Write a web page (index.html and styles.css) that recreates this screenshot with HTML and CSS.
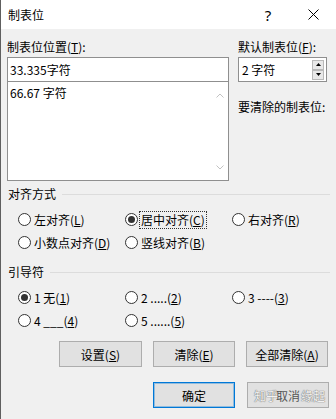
FILE: index.html
```html
<!DOCTYPE html>
<html lang="zh-CN">
<head>
<meta charset="utf-8">
<title>制表位</title>
<link rel="stylesheet" href="styles.css">
</head>
<body>
<div class="dialog">
  <div class="titlebar">
    <span class="title">制表位</span>
    <span class="help">?</span>
    <span class="close"><svg width="11" height="11" viewBox="0 0 11 11"><path d="M0.5 0.5L10.5 10.5M10.5 0.5L0.5 10.5" stroke="#000" stroke-width="1" fill="none"/></svg></span>
  </div>
  <div class="content">
    <div class="top">
      <div class="col-left">
        <div class="label">制表位位置(<u>T</u>):</div>
        <div class="field">33.335字符</div>
        <div class="list">
          <div class="list-items"><div class="item">66.67 字符</div></div>
          <div class="scrollbar">
            <svg width="8" height="5" viewBox="0 0 8 5"><path d="M0.5 4.5L4 1L7.5 4.5" stroke="#c2c2c2" fill="none"/></svg>
            <svg width="8" height="5" viewBox="0 0 8 5"><path d="M0.5 0.5L4 4L7.5 0.5" stroke="#c2c2c2" fill="none"/></svg>
          </div>
        </div>
      </div>
      <div class="col-right">
        <div class="label">默认制表位(<u>F</u>):</div>
        <div class="field spin">
          <span class="spin-text">2 字符</span>
          <span class="spin-btns">
            <span class="sb"><svg width="5" height="3" viewBox="0 0 5 3"><path d="M0 3L2.5 0L5 3Z" fill="#000"/></svg></span>
            <span class="sb"><svg width="5" height="3" viewBox="0 0 5 3"><path d="M0 0L2.5 3L5 0Z" fill="#000"/></svg></span>
          </span>
        </div>
        <div class="label clear-label">要清除的制表位:</div>
      </div>
    </div>

    <div class="group-head"><span>对齐方式</span><span class="rule"></span></div>
    <div class="radios">
      <label class="radio"><span class="circle"></span><span>左对齐(<u>L</u>)</span></label>
      <label class="radio"><span class="circle checked"></span><span class="focus">居中对齐(<u>C</u>)</span></label>
      <label class="radio"><span class="circle"></span><span>右对齐(<u>R</u>)</span></label>
      <label class="radio"><span class="circle"></span><span>小数点对齐(<u>D</u>)</span></label>
      <label class="radio"><span class="circle"></span><span>竖线对齐(<u>B</u>)</span></label>
    </div>

    <div class="group-head second"><span>引导符</span><span class="rule"></span></div>
    <div class="radios">
      <label class="radio"><span class="circle checked"></span><span>1 无(<u>1</u>)</span></label>
      <label class="radio"><span class="circle"></span><span>2 .....(<u>2</u>)</span></label>
      <label class="radio"><span class="circle"></span><span>3 ----(<u>3</u>)</span></label>
      <label class="radio"><span class="circle"></span><span>4 ___(<u>4</u>)</span></label>
      <label class="radio"><span class="circle"></span><span>5 ......(<u>5</u>)</span></label>
    </div>

    <div class="btn-row">
      <button class="btn wide">设置(<u>S</u>)</button>
      <button class="btn">清除(<u>E</u>)</button>
      <button class="btn">全部清除(<u>A</u>)</button>
    </div>
    <div class="btn-row last">
      <button class="btn default">确定</button>
      <button class="btn cancel"><span class="wm wm-left">知乎</span>取消<span class="wm wm-right">缘起</span></button>
    </div>
  </div>
</div>
</body>
</html>
```

FILE: styles.css
```css
html, body {
  margin: 0;
  padding: 0;
  background: #f0f0f0;
}

.dialog {
  width: 336px;
  height: 419px;
  box-sizing: border-box;
  border-left: 1px solid #5f5f5f;
  background: #f0f0f0;
  font-family: "Noto Sans CJK SC", "Noto Sans", sans-serif;
  font-size: 12px;
  line-height: 16px;
  color: #000;
  display: flex;
  flex-direction: column;
  overflow: hidden;
}

.titlebar {
  height: 29px;
  flex: none;
  background: #fff;
  display: flex;
  align-items: center;
  padding-left: 7px;
}

.title {
  flex: 1;
  font-size: 12px;
}

.help {
  width: 30px;
  text-align: center;
  font-family: "Noto Sans", sans-serif;
  font-size: 15px;
  margin-right: 7px;
}

.close {
  width: 46px;
  height: 29px;
  display: flex;
  align-items: center;
  justify-content: center;
}

.content {
  padding: 10px 6px 0 6px;
  display: flex;
  flex-direction: column;
}

.top {
  display: grid;
  grid-template-columns: 222px 89px;
  column-gap: 9px;
}

.label {
  height: 16px;
  margin-bottom: 2px;
  white-space: nowrap;
}

.field {
  height: 25px;
  box-sizing: border-box;
  border: 1px solid #8f8f8f;
  background: #fff;
  padding-left: 2px;
  display: flex;
  align-items: center;
}

.list {
  margin-top: -1px;
  height: 100px;
  box-sizing: border-box;
  border: 1px solid #8f8f8f;
  background: #fff;
  display: flex;
}

.list-items {
  flex: 1;
  padding: 3px 0 0 2px;
}

.scrollbar {
  width: 17px;
  display: flex;
  flex-direction: column;
  align-items: center;
  justify-content: space-between;
  padding: 11px 0 10px;
}

.spin {
  padding-left: 3px;
  padding-right: 2px;
}

.spin-text {
  flex: 1;
}

.spin-btns {
  display: flex;
  flex-direction: column;
  width: 12px;
}

.sb {
  height: 10px;
  box-sizing: border-box;
  border: 1px solid #b9b9b9;
  background: #e8e8e8;
  display: flex;
  align-items: center;
  justify-content: center;
}

.clear-label {
  margin-top: 17px;
}

.group-head {
  margin-top: 5px;
  height: 16px;
  display: flex;
  align-items: center;
  padding-left: 1px;
}

.group-head.second {
  margin-top: 10px;
}

.rule {
  flex: 1;
  height: 1px;
  background: #dcdcdc;
  margin-left: 6px;
}

.radios {
  padding-top: 6px;
  padding-left: 11px;
  display: grid;
  grid-template-columns: 107px 107px auto;
  grid-auto-rows: 23px;
}

.radio {
  display: flex;
  align-items: center;
  white-space: nowrap;
}

.circle {
  width: 13px;
  height: 13px;
  box-sizing: border-box;
  border: 1px solid #333;
  border-radius: 50%;
  background: #fff;
  margin-right: 3px;
  display: flex;
  align-items: center;
  justify-content: center;
  flex: none;
}

.circle.checked::after {
  content: "";
  width: 7px;
  height: 7px;
  border-radius: 50%;
  background: #333;
}

.focus {
  outline: 1px dotted #333;
  outline-offset: 0;
  padding: 0 1px;
  margin-left: -1px;
}

.btn-row {
  margin-top: 9px;
  display: flex;
  justify-content: flex-end;
  gap: 11px;
  padding-right: 2px;
}

.btn-row.last {
  margin-top: 15px;
  gap: 12px;
  padding-right: 1px;
}

.btn {
  width: 82px;
  height: 26px;
  box-sizing: border-box;
  border: 1px solid #adadad;
  background: #e1e1e1;
  font-family: inherit;
  font-size: 12px;
  color: #000;
  padding: 0;
  margin: 0;
  position: relative;
}

.btn.wide {
  width: 83px;
}

.btn.default {
  border-color: #0078d7;
  box-shadow: inset 0 0 0 1px rgba(0, 120, 215, 0.35);
}

.btn.cancel {
  color: #555;
}

.wm {
  position: absolute;
  top: 4px;
  color: #f2f2f2;
  text-shadow: 0 0 1px #6a6a6a, 0 0 1px #6a6a6a;
  white-space: nowrap;
  pointer-events: none;
}

.wm-left {
  left: 6px;
}

.wm-right {
  right: 3px;
}
```
